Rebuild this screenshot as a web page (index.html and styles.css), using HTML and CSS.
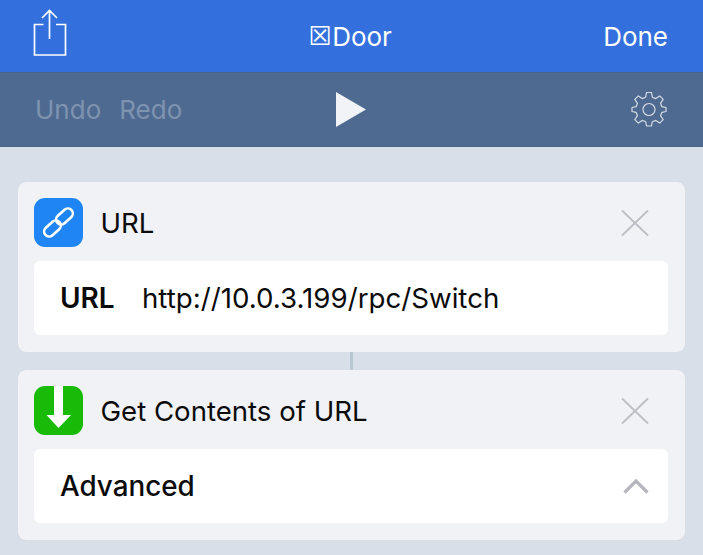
FILE: index.html
```html
<!DOCTYPE html>
<html lang="en">
<head>
<meta charset="utf-8">
<title>Door</title>
<link rel="stylesheet" href="styles.css">
</head>
<body>
<header class="navbar">
  <div class="nav-left">
    <svg class="share-icon" width="36" height="48" viewBox="0 0 36 48" fill="none" stroke="#fff" stroke-width="1.700">
      <path d="M11.500 15.500H2.500V46H33.500V15.500H24"/>
      <path d="M17.500 1.500V30M10 9L17.500 1.500L25 9"/>
    </svg>
  </div>
  <div class="nav-title"><span class="box-glyph">☒</span>Door</div>
  <div class="nav-right">Done</div>
</header>
<div class="toolbar">
  <div class="history"><span>Undo</span><span>Redo</span></div>
  <svg class="play-icon" width="30" height="35" viewBox="0 0 30 35"><path d="M0 0L30 17.500L0 35Z" fill="#f1f3f7"/></svg>
  <div class="tool-right">
    <svg class="gear-icon" width="36" height="36" viewBox="0 0 36 36" fill="none" stroke="#d5dbe5" stroke-width="1.200" stroke-linejoin="round">
      <path d="M15.500 1.500H20.500L21.300 6.200L24.800 7.600L28.700 4.900L32.200 8.400L29.500 12.300L30.900 15.700L35 16.500V20.500L30.900 21.300L29.500 24.700L32.200 28.600L28.700 32.100L24.800 29.400L21.300 30.800L20.500 35H15.500L14.700 30.800L11.200 29.400L7.300 32.100L3.800 28.600L6.500 24.700L5.100 21.300L1 20.500V16.500L5.100 15.700L6.500 12.300L3.800 8.400L7.300 4.900L11.200 7.600L14.700 6.200Z"/>
      <circle cx="18" cy="18.500" r="6"/>
    </svg>
  </div>
</div>
<main class="content">
  <section class="card">
    <div class="card-head">
      <span class="action-icon icon-blue">
        <svg width="49" height="49" viewBox="0 0 49 49" fill="none" stroke="#fff" stroke-width="2.600">
          <rect x="21" y="13.500" width="19" height="10" rx="5" transform="rotate(-42 30.500 18.500)"/>
          <rect x="9" y="25.500" width="19" height="10" rx="5" transform="rotate(-42 18.500 30.500)"/>
        </svg>
      </span>
      <span class="card-title">URL</span>
      <svg class="close-icon" width="28" height="28" viewBox="0 0 28 28" stroke="#bdbfc4" stroke-width="1.800"><path d="M1 1.500L27 26.500M27 1.500L1 26.500"/></svg>
    </div>
    <div class="field">
      <strong class="field-label">URL</strong>
      <span class="field-value">http://10.0.3.199/rpc/Switch</span>
    </div>
  </section>
  <div class="connector"></div>
  <section class="card">
    <div class="card-head">
      <span class="action-icon icon-green">
        <svg width="49" height="49" viewBox="0 0 49 49"><path d="M20 0H29V29H37L24.500 42L12.500 29H20Z" fill="#fff"/></svg>
      </span>
      <span class="card-title">Get Contents of URL</span>
      <svg class="close-icon" width="28" height="28" viewBox="0 0 28 28" stroke="#bdbfc4" stroke-width="1.800"><path d="M1 1.500L27 26.500M27 1.500L1 26.500"/></svg>
    </div>
    <div class="field field-advanced">
      <strong class="advanced-label">Advanced</strong>
      <svg class="chevron-icon" width="26" height="16" viewBox="0 0 26 16" fill="none" stroke="#b4b6bb" stroke-width="3.200"><path d="M1.500 14.500L13 3L24.500 14.500"/></svg>
    </div>
  </section>
</main>
</body>
</html>
```

FILE: styles.css
```css
* { box-sizing: border-box; }
html, body { margin: 0; height: 100%; }
body {
  background: #d9dfe9;
  font-family: Inter, "Liberation Sans", sans-serif;
  overflow: hidden;
  color: #0b0b0b;
}
.navbar {
  height: 72px;
  background: #3470dd;
  color: #fff;
  display: grid;
  grid-template-columns: 1fr auto 1fr;
  align-items: center;
  padding: 0 35px 0 32px;
  font-size: 26px;
}
.nav-left { display: flex; }
.share-icon { display: block; margin-bottom: 6px; }
.nav-title { display: flex; align-items: center; }
.box-glyph { font-family: "DejaVu Sans", sans-serif; font-size: 26px; width: 24px; }
.nav-right { text-align: right; }
.toolbar {
  height: 75px;
  background: #4e6a90;
  border-top: 1px solid #4a6488;
  border-bottom: 2px solid #4c668b;
  display: grid;
  grid-template-columns: 1fr auto 1fr;
  align-items: center;
  padding: 0 36px 0 35px;
}
.history { display: flex; gap: 18px; font-size: 26px; color: #7e93b0; }
.play-icon { display: block; }
.tool-right { display: flex; justify-content: flex-end; }
.gear-icon { display: block; }
.content { padding: 35px 18px 0; }
.card {
  background: #f0f2f6;
  border-radius: 8px;
  height: 170px;
  padding: 16px 17px 0 16px;
  box-shadow: 0 0 1px #c9d0dc;
}
.card-head { display: flex; align-items: center; height: 49px; }
.action-icon {
  width: 49px;
  height: 49px;
  border-radius: 11px;
  display: block;
  overflow: hidden;
  flex: none;
}
.action-icon svg { display: block; }
.icon-blue { background: #1f85f5; }
.icon-green { background: #19bb08; }
.card-title { margin-left: 17.500px; font-size: 27.6px; flex: 1; }
.close-icon { margin-right: 19px; flex: none; }
.field {
  margin-top: 14px;
  height: 74px;
  background: #fff;
  border-radius: 6px;
  display: flex;
  align-items: center;
  padding: 0 19px 0 26px;
}
.field-label { font-size: 28px; font-weight: 600; width: 82px; }
.field-value { font-size: 27.7px; }
.field-advanced { justify-content: space-between; }
.advanced-label { font-size: 27.8px; font-weight: 550; }
.connector { width: 3px; height: 18px; margin-left: 332px; background: #b7c6d1; }
```
